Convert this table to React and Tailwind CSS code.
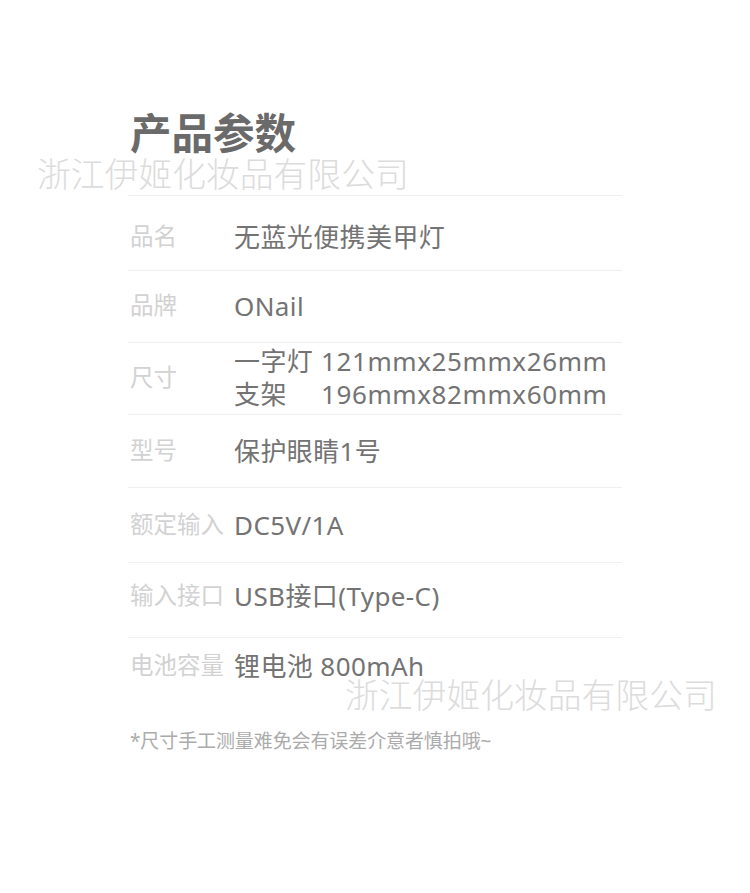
import React from "react";

const rows = [
  { label: "品名", value: "无蓝光便携美甲灯", h: "h-[75px] pt-[8px]" },
  { label: "品牌", value: "ONail", h: "h-[72px]" },
  { label: "尺寸", value: null, h: "h-[72px]" },
  { label: "型号", value: "保护眼睛1号", h: "h-[73px]" },
  { label: "额定输入", value: "DC5V/1A", h: "h-[75px]" },
  { label: "输入接口", value: "USB接口(Type-C)", h: "h-[75px] pb-[7px]" },
  { label: "电池容量", value: "锂电池 800mAh", h: "h-[58px]" },
];

export default function App() {
  return (
    <div
      className="relative w-[750px] h-[893px] bg-white overflow-hidden"
      style={{ fontFamily: '"Noto Sans", "Noto Sans CJK SC", sans-serif' }}
    >
      <div className="pt-[113px] pl-[128px]">
        <h1 className="pl-[2px] text-[41.5px] leading-none font-bold text-[#6a6a6a]">
          产品参数
        </h1>
        <div className="mt-[40px] w-[494px]">
          {rows.map((r, i) => (
            <div
              key={i}
              className={`flex items-center border-t border-[#efefef] ${r.h}`}
            >
              <div className="w-[106px] pl-[2px] text-[23.5px] leading-none text-[#d2d2d2] whitespace-nowrap">
                {r.label}
              </div>
              {r.value ? (
                <div className="text-[26px] leading-none text-[#737373] whitespace-nowrap tracking-[0.4px]">
                  {r.value}
                </div>
              ) : (
                <div className="text-[26px] leading-[33px] text-[#737373] whitespace-nowrap tracking-[0.4px]">
                  <div className="flex">
                    <span className="w-[87px]">一字灯</span>
                    <span className="tracking-[0.6px]">121mmx25mmx26mm</span>
                  </div>
                  <div className="flex">
                    <span className="w-[87px]">支架</span>
                    <span className="tracking-[0.6px]">196mmx82mmx60mm</span>
                  </div>
                </div>
              )}
            </div>
          ))}
        </div>
        <div className="mt-[37px] pl-[2px] text-[19px] leading-none text-[#ababab] whitespace-nowrap tracking-[-0.1px]">
          *尺寸手工测量难免会有误差介意者慎拍哦~
        </div>
      </div>

      <div className="pointer-events-none absolute left-[37px] top-[158px] text-[33.8px] leading-none font-light text-[#dcdcdc] whitespace-nowrap">
        浙江伊姬化妆品有限公司
      </div>
      <div className="pointer-events-none absolute left-[345px] top-[679px] text-[33.8px] leading-none font-light text-[#dcdcdc] whitespace-nowrap">
        浙江伊姬化妆品有限公司
      </div>
    </div>
  );
}
